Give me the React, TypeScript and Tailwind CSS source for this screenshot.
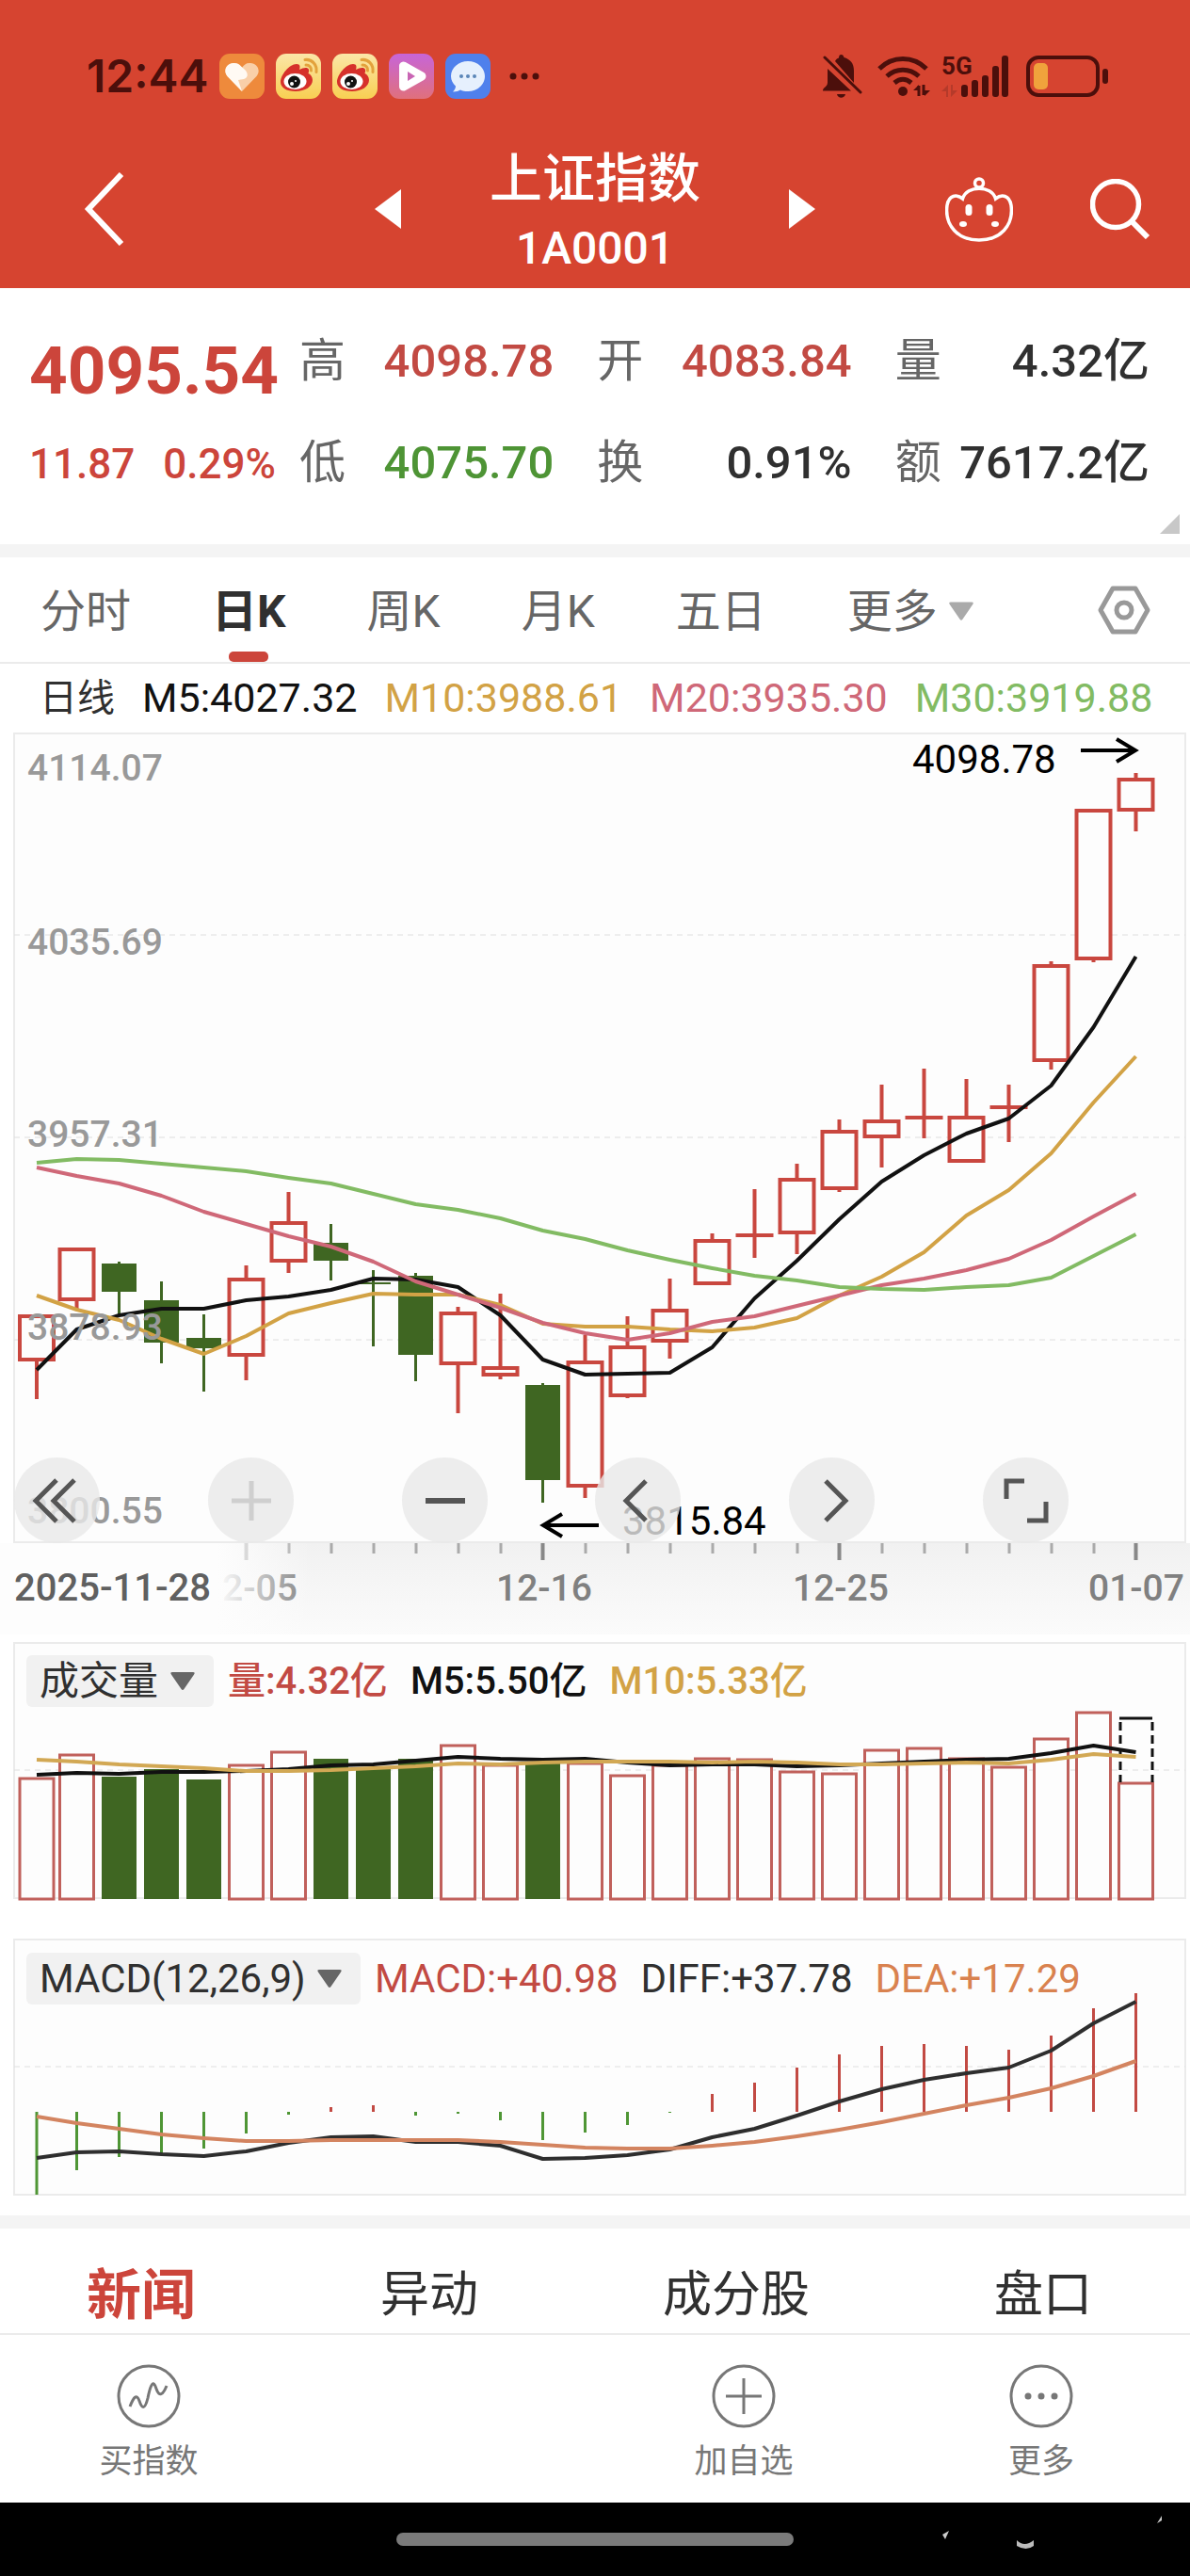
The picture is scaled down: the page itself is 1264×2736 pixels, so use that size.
import React from 'react';

type Candle = {
  up: boolean;
  top: number;
  bottom: number;
  high: number;
  low: number;
};

const c = (up: boolean, top: number, bottom: number, high: number, low: number): Candle => ({ up, top, bottom, high, low });

// centre of the n-th trading day on every chart
const dayX = (i: number) => (i === 0 ? 39 : 36.5 + i * 45);

const candles: Candle[] = [
  c(true, 1396, 1446, 1396, 1486),
  c(true, 1325, 1382, 1325, 1391),
  c(false, 1342, 1372, 1340, 1398),
  c(false, 1381, 1426, 1361, 1448),
  c(false, 1421, 1432, 1396, 1478),
  c(true, 1357, 1441, 1344, 1466),
  c(true, 1297, 1341, 1266, 1352),
  c(false, 1320, 1339, 1300, 1360),
  c(false, 1362, 1364, 1349, 1430),
  c(false, 1355, 1439, 1352, 1467),
  c(true, 1393, 1450, 1388, 1501),
  c(true, 1451, 1462, 1374, 1465),
  c(false, 1471, 1572, 1469, 1596),
  c(true, 1445, 1580, 1418, 1591),
  c(true, 1429, 1484, 1398, 1485),
  c(true, 1390, 1426, 1358, 1443),
  c(true, 1316, 1365, 1310, 1365),
  c(true, 1310, 1314, 1263, 1336),
  c(true, 1251, 1311, 1236, 1332),
  c(true, 1200, 1264, 1189, 1266),
  c(true, 1189, 1209, 1152, 1240),
  c(true, 1185, 1189, 1135, 1209),
  c(true, 1185, 1235, 1146, 1235),
  c(true, 1174, 1178, 1152, 1213),
  c(true, 1024, 1128, 1021, 1136),
  c(true, 859, 1020, 859, 1022),
  c(true, 826, 862, 821, 883),
];

const ma5 = [1455, 1412, 1397, 1390, 1390, 1381, 1377, 1370, 1358, 1359, 1367, 1397, 1444, 1460, 1459, 1458, 1431, 1379, 1339, 1295, 1255, 1227, 1204, 1188, 1153, 1091, 1016];
const ma10 = [1376, 1391, 1402, 1422, 1438, 1419, 1395, 1384, 1374, 1375, 1375, 1386, 1406, 1409, 1409, 1412, 1414, 1410, 1400, 1376, 1356, 1330, 1291, 1264, 1225, 1171, 1122];
const ma20 = [1240, 1249, 1257, 1270, 1287, 1300, 1313, 1324, 1340, 1361, 1375, 1389, 1405, 1416, 1423, 1416, 1404, 1398, 1387, 1376, 1365, 1358, 1349, 1337, 1317, 1292, 1268];
const ma30 = [1235, 1231, 1232, 1236, 1240, 1244, 1251, 1257, 1268, 1279, 1285, 1294, 1307, 1316, 1328, 1338, 1347, 1355, 1360, 1367, 1369, 1370, 1367, 1365, 1357, 1334, 1311];

const volumes = [1888, 1863, 1887, 1879, 1890, 1874, 1860, 1868, 1877, 1868, 1853, 1874, 1872, 1872, 1885, 1874, 1867, 1868, 1881, 1883, 1858, 1856, 1867, 1876, 1846, 1818, 1893];
const volMa5 = [1885, 1883, 1884, 1882, 1882, 1881, 1879, 1875, 1874, 1870, 1866, 1868, 1869, 1868, 1872, 1875, 1874, 1874, 1876, 1875, 1873, 1871, 1869, 1868, 1862, 1854, 1861];
const volMa10 = [1869, 1871, 1874, 1876, 1878, 1881, 1881, 1880, 1878, 1876, 1873, 1874, 1872, 1871, 1871, 1871, 1872, 1871, 1872, 1874, 1874, 1873, 1872, 1873, 1869, 1863, 1866];

const macd = [2331, 2305, 2291, 2288, 2282, 2266, 2246, 2238, 2236, 2247, 2245, 2252, 2273, 2265, 2257, 2244, 2224, 2212, 2196, 2182, 2173, 2171, 2173, 2177, 2162, 2133, 2117];
const diff = [2292, 2286, 2285, 2288, 2290, 2285, 2276, 2270, 2269, 2275, 2275, 2279, 2293, 2292, 2289, 2283, 2270, 2261, 2247, 2232, 2219, 2209, 2202, 2196, 2178, 2149, 2126];
const dea = [2248, 2255, 2261, 2267, 2271, 2274, 2274, 2273, 2273, 2273, 2273, 2275, 2278, 2281, 2282, 2282, 2279, 2275, 2269, 2262, 2254, 2245, 2236, 2228, 2218, 2205, 2189];

const RED = '#c9473f';
const GREEN = '#3f6622';
const ZERO = 2243;

const Line: React.FC<{ data: number[]; color: string }> = ({ data, color }) => (
  <polyline points={data.map((y, i) => `${dayX(i)},${y}`).join(' ')} fill="none" stroke={color} strokeWidth="4" strokeLinejoin="round" />
);

const Frame: React.FC<{ top: number; bottom: number }> = ({ top, bottom }) => (
  <rect x="15" y={top} width="1244" height={bottom - top} fill="#fdfdfd" stroke="#ebebeb" strokeWidth="2" />
);

const GridLine: React.FC<{ y: number }> = ({ y }) => (
  <line x1="15" x2="1259" y1={y} y2={y} stroke="#dedede" strokeWidth="1" strokeDasharray="6 5" />
);

const Down: React.FC<{ className: string }> = ({ className }) => (
  <svg viewBox="0 0 27 21" className={className} aria-hidden="true">
    <path d="M2 0h23q3 0 1 3L15 19q-1.500 2-3 0L1 3Q-1 0 2 0z" fill="currentColor" />
  </svg>
);

const WeiboIcon: React.FC<{ id: string }> = ({ id }) => (
  <svg viewBox="0 0 48 48" className="h-12 w-12">
    <defs>
      <linearGradient id={id} x2="0" y2="1">
        <stop stopColor="#fbe6a8" />
        <stop offset="1" stopColor="#f8cf52" />
      </linearGradient>
    </defs>
    <rect width="48" height="48" rx="11" fill={`url(#${id})`} />
    <path d="M5 30c0-7 9-19 17-19 4 0 4 3 3 6 4-2 9-3 10 0 .5 2-.5 3-.5 4C37 22 39 25 39 28c0 7-8 12-18 12S5 36 5 30z" fill="#d6302b" />
    <ellipse cx="20.500" cy="29.500" rx="12" ry="8.500" fill="#fff" />
    <circle cx="19.500" cy="30" r="6.500" fill="#111" />
    <circle cx="17" cy="32" r="2" fill="#fff" />
    <circle cx="21" cy="29" r="1" fill="#fff" />
    <path d="M31 6.500c7-1 13 5 12 13M32 12c3.500 0 6 2.500 5.500 6" fill="none" stroke="#e3a23c" strokeWidth="3" strokeLinecap="round" />
  </svg>
);

const StatusBar: React.FC = () => (
  <div className="flex items-center justify-between pt-[57px] pr-[87px] pl-[92px] text-[#4c0f0b]">
    <div className="flex items-center gap-3">
      <span className="font-[Inter,sans-serif] text-[48px] leading-[48px] font-semibold">12:44</span>
      <svg viewBox="0 0 48 48" className="h-12 w-12">
        <rect width="48" height="48" rx="11" fill="#ee8a3c" />
        <path d="M24 40L8.500 24C3 17 9 9 16 10c4 0 6 2 8 5 2-3 4-5 8-5 7-1 13 7 7.500 14z" fill="#f9cfa8" />
        <path d="M24 40L8.500 24C3 17 9 9 16 10c4 0 7 3 12 8 3 4 2 8-2 9l-6 1z" fill="#fffaf4" />
      </svg>
      <WeiboIcon id="weibo-a" />
      <WeiboIcon id="weibo-b" />
      <svg viewBox="0 0 48 48" className="h-12 w-12">
        <defs>
          <linearGradient id="video" x2="0" y2="1">
            <stop stopColor="#c765d8" />
            <stop offset="1" stopColor="#e0707c" />
          </linearGradient>
        </defs>
        <rect width="48" height="48" rx="11" fill="url(#video)" />
        <path d="M15.500 13v22L35 24z" fill="none" stroke="#fff" strokeWidth="9" strokeLinejoin="round" />
        <path d="M20 19v10l8-5z" fill="#c965b4" />
      </svg>
      <svg viewBox="0 0 48 48" className="h-12 w-12">
        <rect width="48" height="48" rx="11" fill="#4f80ec" />
        <path d="M24 8c10 0 18 7 18 16s-8 16-18 16c-3 0-6-.5-8-1.500-2 1-4 2-8 2 2-2 3-4 3-6-3-3-5-6-5-10.500C6 15 14 8 24 8z" fill="#e6f0fd" />
        <g fill="#5b86b8">
          <circle cx="17" cy="24" r="2" />
          <circle cx="24" cy="24" r="2" />
          <circle cx="31" cy="24" r="2" />
        </g>
      </svg>
      <svg viewBox="0 0 34 8" className="ml-2 h-2 w-[34px]" fill="currentColor">
        <circle cx="4" cy="4" r="3.500" />
        <circle cx="16" cy="4" r="3.500" />
        <circle cx="28" cy="4" r="3.500" />
      </svg>
    </div>
    <div className="flex items-center">
      <svg viewBox="0 0 42 46" className="mr-4 h-[46px] w-[42px]" fill="currentColor">
        <path d="M13 7c1-2 2-3 4-3.500C17 1 18 0 19.500 0S22 1 22.500 3C29 5 33 9 33 17v13zM5 15l25 23.500H0c0-4 5-4 5-9zM15 42h9c-1 5-8 5-9 0z" />
        <path d="M2 3l38 37" stroke="currentColor" strokeWidth="3" strokeLinecap="round" />
      </svg>
      <svg viewBox="0 0 56 44" className="mr-3 h-11 w-14" fill="none" stroke="currentColor" strokeWidth="5">
        <path d="M2 14c14-14 36-14 50 0M10 22c10-9 24-9 34 0M18 29c6-5 12-5 18 0" />
        <circle cx="27" cy="38" r="5" fill="currentColor" stroke="none" />
        <path d="M44 43V31l-6 6h6zM50 31v12l6-6h-6z" fill="currentColor" stroke="none" />
        <path d="M44 43V32M49 31v11" strokeWidth="3" />
      </svg>
      <div className="grid">
        <span className="col-start-1 row-start-1 font-[Roboto,sans-serif] text-[26px] leading-[24px] font-bold">5G</span>
        <svg viewBox="0 0 72 46" className="col-start-1 row-start-1 h-[46px] w-[72px]" fill="currentColor">
          <rect x="21" y="32" width="7" height="13" rx="3" />
          <rect x="32" y="27" width="7" height="18" rx="3" />
          <rect x="43" y="22" width="7" height="23" rx="3" />
          <rect x="54" y="12" width="7" height="33" rx="3" />
          <rect x="64" y="1" width="7" height="44" rx="3" />
          <path d="M0 39l7-7v13H5v-6zM10 32v13l7-7h-5v-6z" fill="#b53a2a" />
        </svg>
      </div>
      <svg viewBox="0 0 87 44" className="ml-[18px] h-11 w-[87px]">
        <rect x="2" y="2" width="74" height="40" rx="11" fill="none" stroke="currentColor" strokeWidth="4" />
        <rect x="8" y="8" width="15" height="28" rx="5" fill="#f0a23c" />
        <rect x="81" y="14" width="6" height="16" rx="3" fill="currentColor" />
      </svg>
    </div>
  </div>
);

const NavBar: React.FC = () => (
  <div className="mt-[33px] grid h-[168px] grid-cols-[1fr_auto_1fr] items-center">
    <button aria-label="返回" className="justify-self-start pl-[88px]">
      <svg viewBox="0 0 44 78" className="h-[78px] w-11" fill="none" stroke="currentColor" strokeWidth="6">
        <path d="M41 2L6 39l35 37" />
      </svg>
    </button>
    <div className="flex w-[468px] items-center justify-between">
      <button aria-label="上一个">
        <svg viewBox="0 0 28 42" className="h-[42px] w-7" fill="currentColor">
          <path d="M28 0v42L0 21z" />
        </svg>
      </button>
      <h1 className="pt-1 text-center">
        <span className="block text-[56px] leading-[80px] font-medium">上证指数</span>
        <span className="block text-[48px] leading-[68px] font-medium">1A0001</span>
      </h1>
      <button aria-label="下一个">
        <svg viewBox="0 0 28 42" className="h-[42px] w-7" fill="currentColor">
          <path d="M0 0v42l28-21z" />
        </svg>
      </button>
    </div>
    <div className="flex items-center gap-[82px] justify-self-end pr-[42px]">
      <button aria-label="智能助手">
        <svg viewBox="0 0 72 69" className="h-[69px] w-[72px]" fill="none" stroke="currentColor" strokeWidth="3.500">
          <path d="M18.500 23C23 8.500 49 8.500 53.500 23 60 18 68 19 70 30 73 52 58 67 36 67S-1 52 2 30C4 19 12 18 18.500 23z" />
          <circle cx="36" cy="6.500" r="4.500" />
          <g fill="currentColor" stroke="none">
            <rect x="21.500" y="29" width="7" height="12" rx="3.500" />
            <rect x="43.500" y="29" width="7" height="12" rx="3.500" />
            <ellipse cx="19" cy="50" rx="4" ry="3" />
            <ellipse cx="53" cy="50" rx="4" ry="3" />
          </g>
        </svg>
      </button>
      <button aria-label="搜索">
        <svg viewBox="0 0 64 64" className="h-16 w-16" fill="none" stroke="currentColor" strokeWidth="5.500">
          <circle cx="27" cy="27" r="24.500" />
          <path d="M44 45l17 17" strokeWidth="6" />
        </svg>
      </button>
    </div>
  </div>
);

const quotes = [
  { label: '高', value: '4098.78', color: 'text-[#c24a43]' },
  { label: '开', value: '4083.84', color: 'text-[#c24a43]' },
  { label: '量', value: '4.32亿', color: 'text-[#303030]' },
  { label: '低', value: '4075.70', color: 'text-[#4e9435]' },
  { label: '换', value: '0.91%', color: 'text-[#303030]' },
  { label: '额', value: '7617.2亿', color: 'text-[#303030]' },
];

const Quote: React.FC = () => (
  <section className="relative flex pt-6 pr-[43px] pb-8 pl-[31px]">
    <div className="w-[262px] pt-1 font-medium whitespace-nowrap text-[#cc453b]">
      <p className="text-[71px] leading-[120px] font-bold">4095.54</p>
      <p className="flex justify-between text-[44px] leading-[78px]">
        <span>11.87</span>
        <span>0.29%</span>
      </p>
    </div>
    <dl className="ml-[25px] grid flex-1 grid-cols-3 gap-x-[46px] text-[49px] leading-[108px]">
      {quotes.map((q) => (
        <div key={q.label} className="flex justify-between whitespace-nowrap">
          <dt className="text-[#666]">{q.label}</dt>
          <dd className={`font-medium ${q.color}`}>{q.value}</dd>
        </div>
      ))}
    </dl>
    <svg viewBox="0 0 21 21" className="absolute right-[11px] bottom-[11px] h-[21px] w-[21px]">
      <path d="M21 0v21H0z" fill="#c8c8c8" />
    </svg>
  </section>
);

const periods = ['分时', '日K', '周K', '月K', '五日'];

const PeriodTabs: React.FC = () => (
  <nav className="flex h-[113px] items-stretch gap-[86px] border-b-2 border-[#ebebeb] pr-[42px] pl-[43px] text-[48px] text-[#666]">
    {periods.map((p) =>
      p === '日K' ? (
        <button key={p} className="relative pt-1 font-bold text-[#303030]">
          {p}
          <span className="absolute bottom-0 left-1/2 h-[11px] w-[42px] -translate-x-1/2 rounded-[5px] bg-[#cc453b]" />
        </button>
      ) : (
        <button key={p} className="pt-1">{p}</button>
      )
    )}
    <button className="flex items-center gap-3 pt-1">
      更多
      <Down className="h-[21px] w-[26px] text-[#aaa]" />
    </button>
    <button aria-label="设置" className="ml-auto">
      <svg viewBox="0 0 56 52" className="h-[52px] w-14" fill="none" stroke="#999" strokeWidth="5" strokeLinejoin="round">
        <path d="M16 3h24l13 23-13 23H16L3 26z" />
        <circle cx="28" cy="26" r="8" />
      </svg>
    </button>
  </nav>
);

const priceLabels = [
  { y: 829, text: '4114.07' },
  { y: 1014, text: '4035.69' },
  { y: 1218, text: '3957.31' },
  { y: 1423, text: '3878.93' },
  { y: 1618, text: '3800.55' },
];

const CandleShape: React.FC<{ d: Candle; x: number }> = ({ d, x }) => {
  if (!d.up) {
    return (
      <g fill={GREEN}>
        <rect x={x - 18.5} y={d.top} width="37" height={d.bottom - d.top} />
        <rect x={x - 1.5} y={d.high} width="3" height={d.low - d.high} />
      </g>
    );
  }
  return (
    <g fill={RED}>
      <rect x={x - 2} y={d.high} width="4" height={d.top - d.high} />
      <rect x={x - 2} y={d.bottom} width="4" height={d.low - d.bottom} />
      {d.bottom - d.top < 6 ? (
        <rect x={x - 20} y={d.top} width="40" height={d.bottom - d.top} />
      ) : (
        <rect x={x - 18} y={d.top + 2} width="36" height={d.bottom - d.top - 4} fill="#fdfdfd" stroke={RED} strokeWidth="4" />
      )}
    </g>
  );
};

const CircleButton: React.FC<{ label: string; dim?: boolean; children: React.ReactNode }> = ({ label, dim, children }) => (
  <button aria-label={label} className={`h-[91px] w-[91px] rounded-full bg-[#e9e9e9]/80 ${dim ? 'text-[#cfcfcf]' : 'text-[#555]'}`}>
    <svg viewBox="0 0 91 91" className="h-full w-full" fill="none" stroke="currentColor" strokeWidth="5">
      {children}
    </svg>
  </button>
);

const KLineChart: React.FC = () => (
  <section className="grid">
    <svg viewBox="0 778 1264 958" className="col-start-1 row-start-1 block w-full" role="img" aria-label="日K线图">
      <defs>
        <linearGradient id="axis" x2="0" y2="1">
          <stop stopColor="#f1f1f1" />
          <stop offset="1" stopColor="#fbfbfb" />
        </linearGradient>
        <linearGradient id="fade">
          <stop stopColor="#fdfdfd" />
          <stop offset="0.7" stopColor="#fdfdfd" />
          <stop offset="1" stopColor="#fdfdfd" stopOpacity="0" />
        </linearGradient>
      </defs>
      <Frame top={779} bottom={1638} />
      <GridLine y={993} />
      <GridLine y={1208} />
      <GridLine y={1423} />
      {candles.map((d, i) => (
        <CandleShape key={i} d={d} x={dayX(i)} />
      ))}
      <Line data={ma5} color="#111" />
      <Line data={ma10} color="#d2a245" />
      <Line data={ma20} color="#cf6878" />
      <Line data={ma30} color="#82bb63" />
      <g fontSize="39" fontWeight="500" fill="#999">
        {priceLabels.map((l) => (
          <text key={l.text} x="29" y={l.y}>{l.text}</text>
        ))}
      </g>
      <g fontSize="42" fill="#000">
        <text x="969" y="821">4098.78</text>
        <text x="661" y="1630">3815.84</text>
      </g>
      <g fill="none" stroke="#000" strokeWidth="4">
        <path d="M1148 797h57M1186 785l20 12-20 12" />
        <path d="M636 1620h-58M597 1608l-20 12 20 12" />
      </g>
      <rect x="0" y="1639" width="1264" height="97" fill="url(#axis)" />
      {candles.map((_, i) => {
        if (i < 5) return null;
        const major = [5, 12, 19, 26].includes(i);
        return <rect key={i} x={dayX(i) - (major ? 2 : 1)} y="1639" width={major ? 4 : 3} height={major ? 18 : 11} fill={major ? '#888' : '#aaa'} />;
      })}
      <g fontSize="39" fontWeight="500" fill="#808080" textAnchor="middle">
        <text x="276" y="1700">2-05</text>
        <text x="578" y="1700">12-16</text>
        <text x="893" y="1700">12-25</text>
        <text x="1207" y="1700">01-07</text>
      </g>
      <rect x="0" y="1639" width="330" height="97" fill="url(#fade)" />
      <text x="15" y="1700" fontSize="40" fontWeight="500" fill="#606060">2025-11-28</text>
    </svg>
    <div className="col-start-1 row-start-1 flex justify-between self-end pr-[129px] pb-[97px] pl-[15px]">
      <CircleButton label="最早">
        <path d="M45 24L23 46l22 22M64 24L42 46l22 22" />
      </CircleButton>
      <CircleButton label="放大" dim>
        <path d="M25 46h42M46 25v42" />
      </CircleButton>
      <CircleButton label="缩小">
        <path d="M25 46h42" strokeWidth="6" />
      </CircleButton>
      <CircleButton label="左移">
        <path d="M54 25L33 46l21 21" />
      </CircleButton>
      <CircleButton label="右移">
        <path d="M39 25l21 21-21 21" />
      </CircleButton>
      <CircleButton label="全屏">
        <path d="M25 44V25h19M47 67h20V47" />
      </CircleButton>
    </div>
  </section>
);

const IndicatorHeader: React.FC<{ name: string; label: string; children: React.ReactNode }> = ({ name, label, children }) => (
  <div className="col-start-1 row-start-1 flex items-center self-start pt-[22px] pl-7 leading-[55px] whitespace-nowrap">
    <div className="relative mr-[15px] flex h-[55px] items-center rounded-md bg-[#f1f1f1]">
      <select aria-label={label} className="h-16 appearance-none pr-[58px] pl-[14px] text-[42px] leading-[64px] text-[#303030]">
        <option>{name}</option>
      </select>
      <Down className="pointer-events-none absolute top-[18px] right-[19px] h-5 w-7 text-[#666]" />
    </div>
    <div className="flex gap-6">{children}</div>
  </div>
);

const VolumeChart: React.FC = () => (
  <section className="grid">
    <svg viewBox="0 1736 1264 316" className="col-start-1 row-start-1 block w-full" role="img" aria-label="成交量图">
      <Frame top={1745} bottom={2016} />
      <GridLine y={1880} />
      {volumes.map((top, i) =>
        candles[i].up ? (
          <rect key={i} x={dayX(i) - 18} y={top + 1} width="36" height={2016 - top} fill="#fdfdfd" stroke="#c0605b" strokeWidth="3" />
        ) : (
          <rect key={i} x={dayX(i) - 18.5} y={top} width="37" height={2017 - top} fill={GREEN} />
        )
      )}
      <path d="M1189 1825h35" stroke="#111" strokeWidth="3" />
      <path d="M1190 1829v64M1224 1829v64" stroke="#111" strokeWidth="3" strokeDasharray="9 5" />
      <Line data={volMa5} color="#111" />
      <Line data={volMa10} color="#d2a854" />
    </svg>
    <IndicatorHeader name="成交量" label="副图指标一">
      <span className="text-[40px] font-medium text-[#c24a43]">量:4.32亿</span>
      <span className="text-[40px] font-medium text-[#111]">M5:5.50亿</span>
      <span className="text-[40px] font-medium text-[#d2a245]">M10:5.33亿</span>
    </IndicatorHeader>
  </section>
);

const MacdChart: React.FC = () => (
  <section className="grid">
    <svg viewBox="0 2052 1264 301" className="col-start-1 row-start-1 block w-full" role="img" aria-label="MACD图">
      <Frame top={2060} bottom={2331} />
      <GridLine y={2195} />
      {macd.map((y, i) => (
        <rect key={i} x={dayX(i) - 1.5} y={Math.min(y, ZERO)} width="3" height={Math.abs(y - ZERO)} fill={y > ZERO ? '#4f9635' : '#c24a43'} />
      ))}
      <Line data={diff} color="#2e2e2e" />
      <Line data={dea} color="#d38460" />
    </svg>
    <IndicatorHeader name="MACD(12,26,9)" label="副图指标二">
      <span className="text-[42px] text-[#c24a43]">MACD:+40.98</span>
      <span className="text-[42px] text-[#303030]">DIFF:+37.78</span>
      <span className="text-[42px] text-[#d9824f]">DEA:+17.29</span>
    </IndicatorHeader>
  </section>
);

const BottomItem: React.FC<{ label: string; className: string; children: React.ReactNode }> = ({ label, className, children }) => (
  <button className={`flex flex-col items-center text-[35px] leading-[44px] text-[#777] ${className}`}>
    <svg viewBox="0 0 68 68" className="mb-[14px] h-[68px] w-[68px]" fill="none" stroke="currentColor" strokeWidth="3">
      <circle cx="34" cy="34" r="32" />
      {children}
    </svg>
    {label}
  </button>
);

export default function App() {
  return (
    <div className="w-full bg-white font-[Roboto,'Noto_Sans_CJK_SC',sans-serif]">
      <header className="bg-[#d64430] text-white">
        <StatusBar />
        <NavBar />
      </header>
      <Quote />
      <div className="h-[14px] bg-[#f4f4f4]" />
      <PeriodTabs />
      <div className="flex h-[73px] items-center gap-[29px] pl-[42px] text-[43px] whitespace-nowrap">
        <span className="text-[40px] text-[#303030]">日线</span>
        <span className="text-[#111]">M5:4027.32</span>
        <span className="text-[#d2a245]">M10:3988.61</span>
        <span className="text-[#cf6878]">M20:3935.30</span>
        <span className="text-[#82bb63]">M30:3919.88</span>
      </div>
      <KLineChart />
      <VolumeChart />
      <MacdChart />
      <div className="h-[14px] bg-[#f4f4f4]" />
      <nav className="flex h-[113px] items-center justify-between border-b-2 border-[#ebebeb] pt-[31px] pr-[104px] pl-[92px] text-[52px] text-[#303030]">
        <button className="text-[58px] font-bold text-[#cc453b]">新闻</button>
        <button>异动</button>
        <button>成分股</button>
        <button>盘口</button>
      </nav>
      <nav className="grid h-[178px] grid-cols-4 pt-[31px]">
        <BottomItem label="买指数" className="col-start-1">
          <path d="M14 45c4-10 7-14 10-6 3 9 6 9 9-3 3-15 6-20 9-10 3 9 7 7 11-3" />
        </BottomItem>
        <BottomItem label="加自选" className="col-start-3">
          <path d="M15 34h38M34 15v38" />
        </BottomItem>
        <BottomItem label="更多" className="col-start-4">
          <g fill="currentColor" stroke="none">
            <circle cx="20" cy="34" r="3.500" />
            <circle cx="34" cy="34" r="3.500" />
            <circle cx="48" cy="34" r="3.500" />
          </g>
        </BottomItem>
      </nav>
      <footer className="relative flex h-[78px] items-center justify-center bg-black">
        <div className="h-[14px] w-1/3 rounded-full bg-[#7a7a7a]" />
        <svg viewBox="0 0 234 50" className="absolute top-[6px] right-[30px] h-[50px] w-[234px]">
          <path d="M1 28l7-4-4 9z" fill="#ccc" />
          <path d="M80 34q8 8 18 0v6q-8 6-18 0z" fill="#bbb" />
          <path d="M229 16l5-8v5z" fill="#ccc" />
        </svg>
      </footer>
    </div>
  );
}
